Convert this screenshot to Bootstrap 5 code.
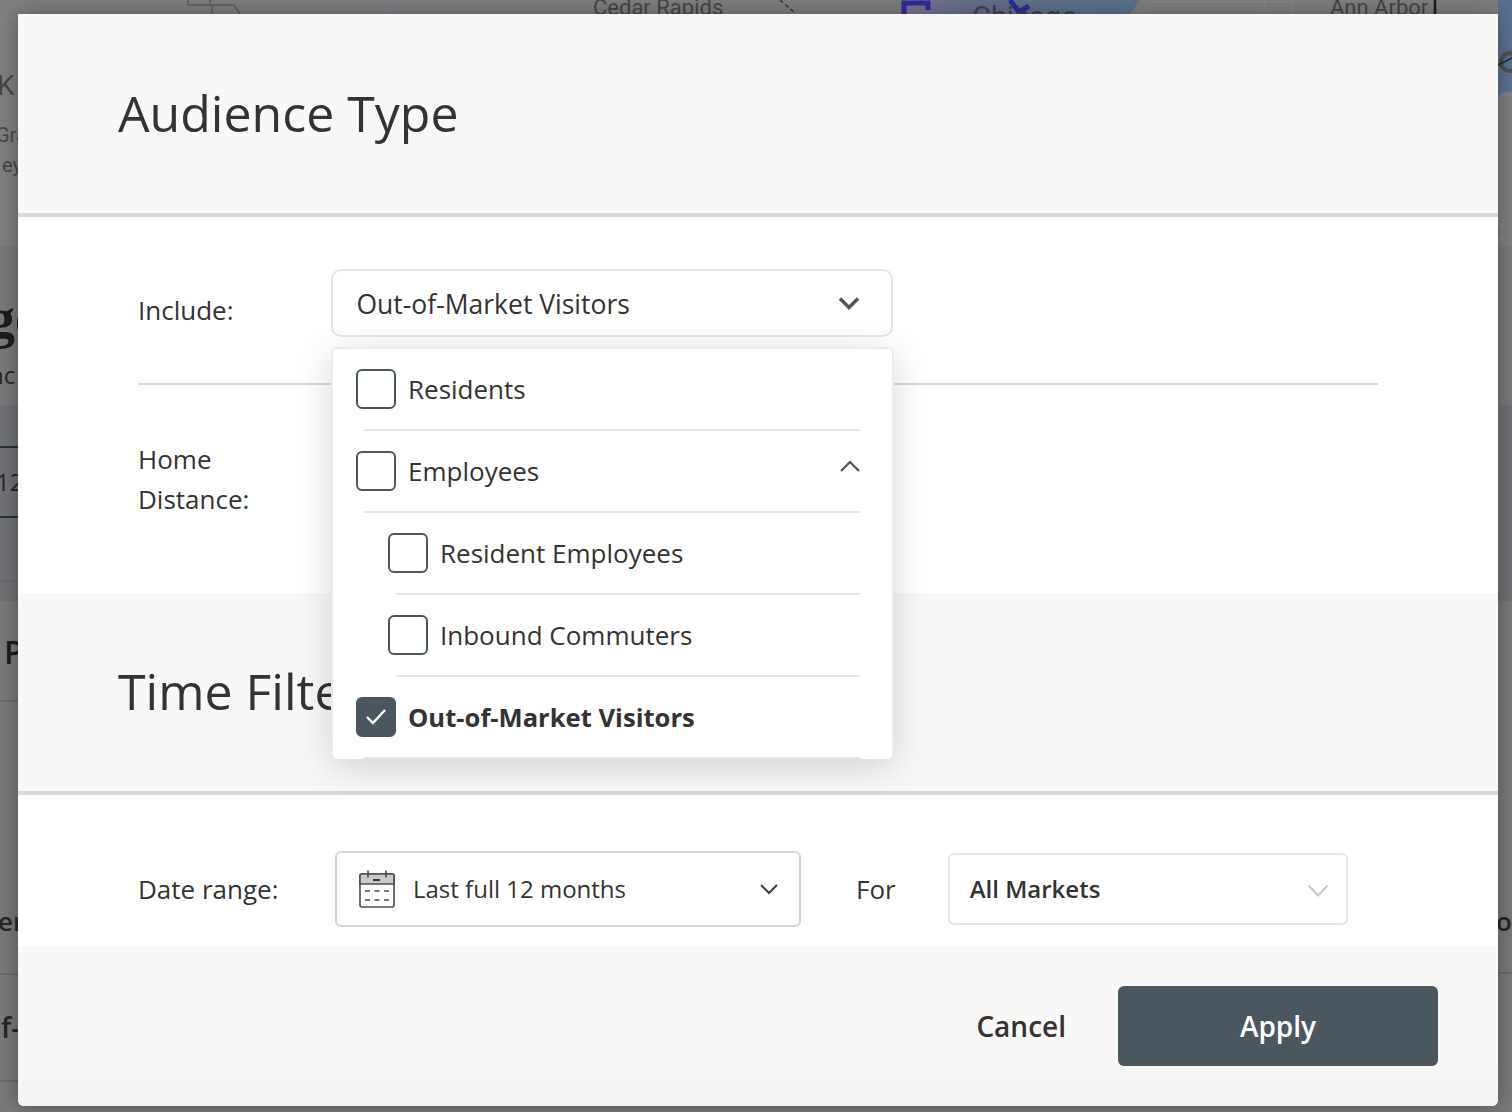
<!DOCTYPE html>
<html lang="en">
<head>
<meta charset="UTF-8">
<meta name="viewport" content="width=device-width, initial-scale=1.0">
<title>Audience Type</title>
<link rel="stylesheet" href="https://cdn.jsdelivr.net/npm/bootstrap@5.3.0/dist/css/bootstrap.min.css">
<style>
html, body { height: 100%; overflow: hidden; }
body {
    position: relative;
    background: #7c7c7c;
    font-family: "Open Sans", "Noto Sans", sans-serif;
    color: #333;
    padding: 14px 14px 6px 18px;
}
/* page behind the dimmed backdrop */
.behind { position: absolute; inset: 0; overflow: hidden; background: #7a7a7a; }
.behind-top { position: absolute; left: 0; right: 0; top: 0; height: 246px; background: #808080; }
.behind-band { position: absolute; left: 0; right: 0; top: 405px; height: 196px; background: #707275; }
.behind-lines { position: absolute; left: 0; top: 0; }
.bit { position: absolute; color: #3a3a3a; font-family: Roboto, sans-serif; white-space: nowrap; line-height: 1; }
.bit-map { color: #474747; font-size: 22px; }
.bit-page { font-family: "Open Sans", sans-serif; font-size: 26px; color: #262626; }
.bit-bold { font-weight: 700; font-size: 32px; color: #1d1d1d; }
.bit-rule { position: absolute; left: 0; width: 18px; height: 2px; background: #6a6a6a; }
.bit-rule-r { left: auto; right: 0; width: 14px; }
.bit-rule-dark { background: #2b3035; }

.sheet {
    position: relative;
    width: 1480px;
    height: 1092px;
    background: #fff;
    border-radius: 0 0 6px 6px;
    display: flex;
    flex-direction: column;
    box-shadow: 0 0 22px rgba(0, 0, 0, .35);
}
.sheet-head {
    background: #f9f8f6;
    border-bottom: 4px solid #d8d8d8;
    padding: 0 100px;
    display: flex;
    align-items: center;
}
.head-one { height: 203px; }
.head-two { height: 202px; }
.sheet-head h2 { font-size: 50px; font-weight: 400; line-height: 1; margin: 0 0 2px; color: #333; }
.sheet-pane { padding: 0 120px; }
.pane-one { height: 376px; }
.pane-two { height: 151px; }
.field-label { font-size: 26px; line-height: 40px; color: #333; }
.include-row { padding-top: 52px; height: 168px; border-bottom: 2px solid #d8d8d8; }
.include-label { width: 193px; padding-top: 21px; }
.picker {
    width: 562px;
    height: 68px;
    border: 2px solid #e4e4e4;
    border-radius: 10px;
    background: #fff;
    padding: 0 31px 0 23.500px;
    font-size: 26.500px;
    color: #333;
}
.picker-text { padding-top: 3px; }
.distance-row { padding-top: 54px; }
.filter-row { padding-top: 56px; }
.date-label { width: 197px; }
.date-box {
    width: 466px;
    height: 76px;
    border: 2px solid #d6d6d6;
    border-radius: 6px;
    padding: 0 20px 0 22px;
    font-size: 24px;
}
.date-icon { margin-right: 18px; }
.for-label { margin: 0 52px 0 55px; }
.market-box {
    width: 400px;
    height: 72px;
    border: 2px solid #e6e6e6;
    border-radius: 6px;
    padding: 0 17px 0 20px;
    font-size: 24px;
    font-weight: 600;
}
.market-arrow { margin-top: 3px; }
.sheet-foot {
    flex: 1;
    background: linear-gradient(to bottom, #f9f8f6 0, #f9f8f6 75%, #f3f3f2 100%);
    border-radius: 0 0 6px 6px;
    padding: 40px 60px 0 0;
}
.btn-cancel { height: 80px; font-size: 28px; font-weight: 600; color: #333; padding: 0; border: 0; margin-right: 52px; }
.btn-apply {
    width: 320px;
    height: 80px;
    background: #4b575f;
    border: 0;
    border-radius: 6px;
    color: #fff;
    font-size: 28px;
    font-weight: 600;
}
.btn-apply:hover { background: #4b575f; color: #fff; }

/* open include menu */
.pick-menu {
    position: absolute;
    left: 313px;
    top: 333px;
    width: 563px;
    height: 412px;
    background: #fff;
    border: 2px solid #ebebeb;
    border-bottom: 0;
    border-radius: 6px;
    box-shadow: 0 8px 36px rgba(0, 0, 0, .16);
    padding: 0 32px 0 23px;
    overflow: hidden;
}
.pick-row { height: 82px; border-bottom: 2px solid #e6e6e6; margin-left: 8px; font-size: 26px; position: relative; }
.pick-row .tick-box { margin-left: -8px; }
.pick-sub { margin-left: 40px; }
.tick-box {
    width: 40px;
    height: 40px;
    flex: none;
    border: 2px solid #4b575f;
    border-radius: 6px;
    margin-right: 12px;
    background: #fff;
}
.tick-on { background: #4b575f; }
.pick-bold { font-weight: 700; font-size: 25.600px; }
.pick-bold-text { padding-top: 2px; }
.pick-up { margin-bottom: 10px; margin-right: -1px; }
</style>
</head>
<body>
<div class="behind">
    <div class="behind-top"></div>
    <div class="behind-band"></div>
    <svg class="behind-lines" width="1512" height="246" viewBox="0 0 1512 246" fill="none">
        <defs>
            <linearGradient id="lake" x1="0" x2="1" y1="0" y2="0">
                <stop offset="0" stop-color="#7d7a90"/>
                <stop offset=".3" stop-color="#66708c"/>
                <stop offset="1" stop-color="#5a7390"/>
            </linearGradient>
        </defs>
        <path d="M900 0h240l-10 14H900z" fill="url(#lake)"/>
        <path d="M1498 0h14v92q-8-2-14 4z" fill="#5a7190"/>
        <path d="M188 0v5h24v9M212 5h22l6 9M210 0v5" stroke="#5c5c5c" stroke-width="1.500"/>
        <path d="M396 0l-6 14" stroke="#6f86a6" stroke-width="1.500"/>
        <path d="M780 0l14 12" stroke="#333" stroke-width="1.500" stroke-dasharray="4 3"/>
        <path d="M904 14V3h24v7" stroke="#2f2d96" stroke-width="5"/>
        <path d="M1010 0l9 12 10-6M1019 12l6 2" stroke="#2f2d96" stroke-width="5"/>
        <path d="M1435 0v14" stroke="#1d1d1d" stroke-width="2.500"/>
        <path d="M1140 14l12-12h140v12M1264 0v14" stroke="#8b8b8b" stroke-width="1"/>
        <circle cx="1510" cy="62" r="9" stroke="#4f4f4f" stroke-width="4"/>
        <path d="M1498 65l16-8" stroke="#1f2933" stroke-width="1.500"/>
    </svg>
    <span class="bit bit-map" style="left:593px;top:-3px">Cedar Rapids</span>
    <span class="bit bit-map" style="left:972px;top:3px;font-size:29px;color:#3f4350">Chicago</span>
    <span class="bit bit-map" style="left:1330px;top:-3px">Ann Arbor</span>
    <span class="bit bit-map" style="left:-3px;top:72px;font-size:28px">K</span>
    <span class="bit bit-map" style="left:-4px;top:125px;font-size:20px">Gra</span>
    <span class="bit bit-map" style="left:2px;top:155px;font-size:20px">ey</span>
    <span class="bit bit-page bit-bold" style="left:-13px;top:290px;font-family:'Liberation Serif',serif;font-size:56px">ge</span>
    <span class="bit bit-page" style="left:-11px;top:363px;font-size:24px">nc</span>
    <span class="bit bit-page" style="left:-4px;top:470px;font-size:24px">12</span>
    <span class="bit bit-page bit-bold" style="left:4px;top:636px;font-weight:600">P</span>
    <span class="bit bit-page" style="left:-2px;top:908px;font-weight:600">er</span>
    <span class="bit bit-page" style="left:1px;top:1013px;font-weight:600;font-size:28px">f-</span>
    <span class="bit bit-page" style="left:1496px;top:908px;font-weight:600">or</span>
    <span class="bit bit-page" style="left:1491px;top:216px;font-size:26px;font-weight:600;color:#3a3a3a">)</span>
    <div class="bit-rule bit-rule-dark" style="top:446px"></div>
    <div class="bit-rule bit-rule-dark" style="top:516px"></div>
    <div class="bit-rule" style="top:580px"></div>
    <div class="bit-rule" style="top:700px"></div>
    <div class="bit-rule" style="top:973px"></div>
    <div class="bit-rule" style="top:1080px"></div>
    <div class="bit-rule bit-rule-r" style="top:972px"></div>
</div>

<div class="sheet">
    <div class="sheet-head head-one"><h2>Audience Type</h2></div>
    <div class="sheet-pane pane-one">
        <div class="include-row d-flex">
            <div class="field-label include-label">Include:</div>
            <div class="picker d-flex align-items-center justify-content-between">
                <span class="picker-text">Out-of-Market Visitors</span>
                <svg width="22" height="14" viewBox="0 0 22 14" fill="none" stroke="#4b575f" stroke-width="3.400"><path d="M2 2.500l9 9 9-9"/></svg>
            </div>
        </div>
        <div class="distance-row field-label">Home<br>Distance:</div>
    </div>
    <div class="sheet-head head-two"><h2>Time Filter</h2></div>
    <div class="sheet-pane pane-two">
        <div class="filter-row d-flex align-items-center">
            <div class="field-label date-label">Date range:</div>
            <div class="date-box d-flex align-items-center">
                <svg class="date-icon flex-shrink-0" width="36" height="38" viewBox="0 0 36 38">
                    <rect x="1" y="4" width="34" height="33" rx="2" fill="#fff" stroke="#4d4d4d" stroke-width="1.600"/>
                    <path d="M1 5.500a1.500 1.500 0 0 1 1.500-1.500h31a1.500 1.500 0 0 1 1.500 1.500V14H1z" fill="#c9c9c9" stroke="#4d4d4d" stroke-width="1.600"/>
                    <path d="M9 0.500v7M27 0.500v7" stroke="#4d4d4d" stroke-width="1.600"/>
                    <path d="M14 10h7" stroke="#333" stroke-width="2"/>
                    <path d="M6 21h5M15.500 21h5M25 21h5M6 30h5M15.500 30h5M25 30h5" stroke="#4d4d4d" stroke-width="1.600"/>
                </svg>
                <span class="flex-grow-1">Last full 12 months</span>
                <svg width="20" height="12" viewBox="0 0 20 12" fill="none" stroke="#3c444a" stroke-width="2"><path d="M2 2l8 8 8-8"/></svg>
            </div>
            <div class="field-label for-label">For</div>
            <div class="market-box d-flex align-items-center justify-content-between">
                <span>All Markets</span>
                <svg class="market-arrow" width="22" height="14" viewBox="0 0 22 14" fill="none" stroke="#c8c8c8" stroke-width="2"><path d="M1.500 1.500l9.500 10 9.500-10"/></svg>
            </div>
        </div>
    </div>
    <div class="sheet-foot d-flex justify-content-end align-items-start">
        <button type="button" class="btn btn-cancel">Cancel</button>
        <button type="button" class="btn btn-apply">Apply</button>
    </div>

    <div class="pick-menu">
        <div class="pick-row d-flex align-items-center"><span class="tick-box"></span>Residents</div>
        <div class="pick-row d-flex align-items-center justify-content-between">
            <span class="d-flex align-items-center"><span class="tick-box"></span>Employees</span>
            <svg class="pick-up" width="22" height="14" viewBox="0 0 22 14" fill="none" stroke="#4b575f" stroke-width="2.200"><path d="M2 12l9-9 9 9"/></svg>
        </div>
        <div class="pick-row pick-sub d-flex align-items-center"><span class="tick-box"></span>Resident Employees</div>
        <div class="pick-row pick-sub d-flex align-items-center"><span class="tick-box"></span>Inbound Commuters</div>
        <div class="pick-row pick-bold d-flex align-items-center">
            <span class="tick-box tick-on d-flex align-items-center justify-content-center">
                <svg width="22" height="18" viewBox="0 0 22 18" fill="none" stroke="#fff" stroke-width="2.400"><path d="M2 9l6 6L20 2"/></svg>
            </span><span class="pick-bold-text">Out-of-Market Visitors</span>
        </div>
    </div>
</div>
<script src="https://cdn.jsdelivr.net/npm/bootstrap@5.3.0/dist/js/bootstrap.bundle.min.js"></script>
</body>
</html>
